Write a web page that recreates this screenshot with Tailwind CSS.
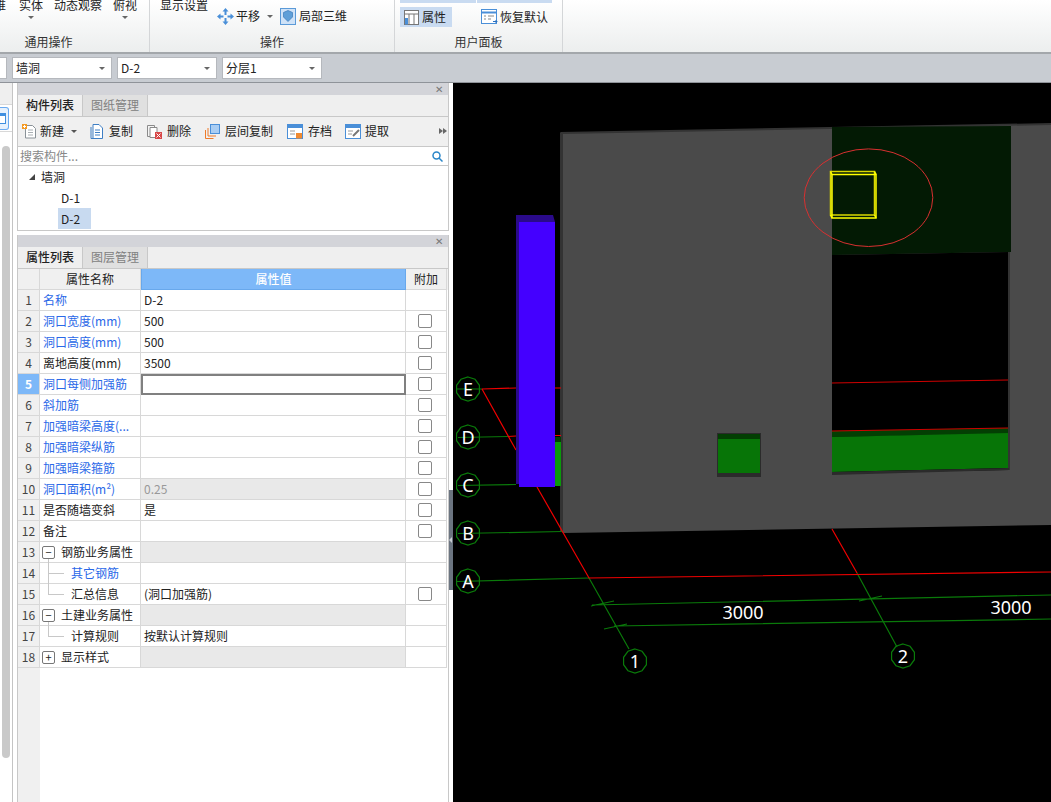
<!DOCTYPE html>
<html lang="zh">
<head>
    <meta charset="UTF-8">
    <title>墙洞</title>
    <script src="https://cdn.jsdelivr.net/npm/@tailwindcss/browser@4"></script>
</head>
<body class="w-[1051px] h-[802px] overflow-hidden bg-white text-[12px] text-[#222] font-['Noto_Sans_CJK_SC',sans-serif]">

    <!-- ribbon -->
    <div class="h-[54px] flex bg-gradient-to-b from-white to-[#eceeee] border-b-2 border-[#a3a7ab]">
        <div class="w-[150px] flex flex-col border-r border-[#d4d6d8]">
            <div class="h-[36px] flex leading-[14px] -mt-[2px]">
                <span class="w-[19px] -ml-[6px] pl-0 shrink-0">维</span>
                <div class="ml-[6px] w-[24px] flex flex-col items-center"><span>实体</span><i class="mt-[4px] border-x-[3px] border-x-transparent border-t-[3px] border-t-[#666]"></i></div>
                <span class="ml-[11px]">动态观察</span>
                <div class="ml-[11px] w-[24px] flex flex-col items-center"><span>俯视</span><i class="mt-[4px] border-x-[3px] border-x-transparent border-t-[3px] border-t-[#666]"></i></div>
            </div>
            <div class="text-center leading-[14px] mt-[1px] -ml-[52px] text-[#333]">通用操作</div>
        </div>
        <div class="w-[245px] flex flex-col border-r border-[#d4d6d8]">
            <div class="h-[36px] flex">
                <span class="ml-[10px] -mt-[2px] leading-[14px]">显示设置</span>
                <div class="ml-[9px] mt-[7px] h-[18px] flex items-center">
                    <svg class="w-[17px] h-[17px]" viewBox="0 0 17 17" fill="#4a8fd8"><path d="M8.5 0l3 3.500h-2v3.500h-2v-3.500h-2zM8.500 17l-3-3.500h2v-3.500h2v3.500h2zM0 8.500l3.500-3v2h3v2h-3v2zM17 8.500l-3.500 3v-2h-3v-2h3v-2z"/></svg>
                    <span class="ml-[2px]">平移</span>
                    <i class="ml-[7px] border-x-[3px] border-x-transparent border-t-[3px] border-t-[#666]"></i>
                    <span class="ml-[7px] w-[16px] h-[17px] flex items-center justify-center bg-[#cfe2f7] border border-[#5b9ad8]">
                        <svg class="w-[10px] h-[12px]" viewBox="0 0 10 12"><path d="M5 .5L9.500 2.500V7L5 11.500.5 7V2.500z" fill="#5f9fd8" stroke="#3a78b8" stroke-width=".7"/></svg>
                    </span>
                    <span class="ml-[3px]">局部三维</span>
                </div>
            </div>
            <div class="text-center leading-[14px] -mt-[1px] text-[#333]">操作</div>
        </div>
        <div class="w-[168px] flex flex-col border-r border-[#d4d6d8]">
            <div class="h-[36px] pl-[5px]">
                <div class="flex gap-[1px]">
                    <span class="w-[76px] h-[3px] bg-[#c9dbf1]"></span>
                    <span class="w-[75px] h-[3px] bg-[#c9dbf1]"></span>
                </div>
                <div class="flex mt-[4px] items-center">
                    <div class="w-[52px] h-[20px] flex items-center pl-[4px] bg-[#c9dbf1]">
                        <svg class="w-[15px] h-[15px]" viewBox="0 0 15 15" fill="none" stroke="#777"><rect x=".5" y=".5" width="14" height="14" fill="#fff"/><path d="M.5 4h14M5 4v10.500M10 4v10.500"/><rect x="1" y="8" width="3" height="6.500" fill="#4a8fd8" stroke="none"/></svg>
                        <span class="ml-[3px]">属性</span>
                    </div>
                    <svg class="ml-[29px] w-[17px] h-[16px]" viewBox="0 0 17 16" fill="none" stroke="#4a8fd8"><rect x=".5" y=".5" width="15" height="14" fill="#fff"/><path d="M.5 3.500h15" stroke-width="2"/><path d="M3 7h2M7 7h6M3 10h2M7 10h3" stroke="#888"/><path d="M12 12.500h4M14.500 11l1.500 1.500-1.500 1.500" stroke="#2a70c0"/></svg>
                    <span class="ml-[2px]">恢复默认</span>
                </div>
            </div>
            <div class="text-center leading-[14px] -mt-[1px] text-[#333]">用户面板</div>
        </div>
    </div>

    <!-- combo bar -->
    <div class="h-[29px] flex items-center gap-[5px] bg-[#c8ccd2] border-b border-[#8f9399] -ml-[93px]">
        <div class="w-[100px] h-[22px] flex items-center justify-end pr-[6px] bg-white border border-[#b5b8bd]"><i class="border-x-[3px] border-x-transparent border-t-[3px] border-t-[#666]"></i></div>
        <div class="w-[100px] h-[22px] flex items-center justify-between px-[3px] pr-[6px] bg-white border border-[#b5b8bd]">墙洞<i class="border-x-[3px] border-x-transparent border-t-[3px] border-t-[#666]"></i></div>
        <div class="w-[100px] h-[22px] flex items-center justify-between px-[3px] pr-[6px] bg-white border border-[#b5b8bd]">D-2<i class="border-x-[3px] border-x-transparent border-t-[3px] border-t-[#666]"></i></div>
        <div class="w-[100px] h-[22px] flex items-center justify-between px-[3px] pr-[6px] bg-white border border-[#b5b8bd]">分层1<i class="border-x-[3px] border-x-transparent border-t-[3px] border-t-[#666]"></i></div>
    </div>

    <div class="h-[719px] flex">
        <!-- left rail -->
        <div class="w-[13px] flex flex-col bg-white border-r border-[#c4c4c4]">
            <div class="h-[22px] bg-[#efefef] border-b border-[#d8d8d8]"></div>
            <div class="h-[27px] flex items-center border-b border-[#d8d8d8]">
                <span class="w-[9px] h-[23px] flex items-center bg-[#e6f1fd] border border-l-0 border-[#6aaaf0] rounded-r-[3px]">
                    <span class="w-[6px] h-[11px] bg-white border border-l-0 border-[#3f8fe0] border-t-[3px]"></span>
                </span>
            </div>
            <div class="w-[8px] h-[612px] ml-[2px] mt-[14px] rounded-[4px] bg-[#c9c9c9]"></div>
        </div>
        <div class="w-[4px] bg-white"></div>

        <!-- panels -->
        <div class="w-[432px] flex flex-col">
            <div class="h-[148px] flex flex-col border border-t-0 border-[#c8c8c8] bg-white">
                <div class="h-[12px] shrink-0 flex justify-end items-center pr-[5px] bg-[#d3d4d9] text-[#777] text-[10px] leading-none">✕</div>
                <div class="h-[22px] shrink-0 flex bg-[#efefef] border-b border-[#c8c8c8]">
                    <span class="w-[65px] text-center leading-[20px] font-medium border-r border-[#c8c8c8]">构件列表</span>
                    <span class="w-[65px] text-center leading-[20px] text-[#808080] bg-[#e0e0e0] border-r border-[#c8c8c8]">图纸管理</span>
                </div>
                <div class="h-[30px] shrink-0 flex items-center pl-[4px] pb-[1px] bg-[#f0f0f0] border-b border-[#c8c8c8]">
                    <svg class="w-[15px] h-[15px]" viewBox="0 0 15 15" fill="none"><path d="M3.500 1.500h7l3 3v9.500h-10z" fill="#fff" stroke="#8a9298"/><path d="M6 6h5M6 8.500h5M6 11h5" stroke="#a8aeb2"/><rect x="0" y="0" width="5" height="5" fill="#f59a23"/><path d="M1 2.500h3M2.500 1v3" stroke="#fff"/></svg>
                    <span class="ml-[3px]">新建</span>
                    <i class="ml-[7px] border-x-[3px] border-x-transparent border-t-[3px] border-t-[#555]"></i>
                    <svg class="ml-[13px] w-[13px] h-[15px]" viewBox="0 0 13 15" fill="none" stroke="#3f7fc4"><path d="M3 .5h6l3.500 3.500v10.500h-9.500z" fill="#fff"/><path d="M1 3v11.500h2M5 6h5M5 8.500h5M5 11h5"/></svg>
                    <span class="ml-[6px]">复制</span>
                    <svg class="ml-[14px] w-[15px] h-[15px]" viewBox="0 0 15 15" fill="none" stroke="#8a8a8a"><path d="M.5 1.500h7v11h-7z" fill="#f4f4f4"/><path d="M3 3.500h7v10h-7z" fill="#fff"/><rect x="8" y="8" width="7" height="7" fill="#d84848" stroke="none"/><path d="M9.500 9.500l4 4M13.500 9.500l-4 4" stroke="#fff"/></svg>
                    <span class="ml-[5px]">删除</span>
                    <svg class="ml-[14px] w-[15px] h-[15px]" viewBox="0 0 15 15" fill="none"><path d="M.5 6v8.500h8M3 4v8h8" stroke="#ee7b2a"/><rect x="5.500" y=".5" width="9" height="9" fill="#a9cdf3" stroke="#4a8fd8"/></svg>
                    <span class="ml-[5px]">层间复制</span>
                    <svg class="ml-[14px] w-[16px] h-[15px]" viewBox="0 0 16 15" fill="none" stroke="#4a8fd8"><rect x=".5" y=".5" width="15" height="14" fill="#fff"/><path d="M.5 2.500h15" stroke-width="3"/><path d="M3 7h5M3 10h5" stroke="#999"/><rect x="9" y="9" width="6" height="5.500" fill="#f08a30" stroke="none"/></svg>
                    <span class="ml-[5px]">存档</span>
                    <svg class="ml-[13px] w-[16px] h-[15px]" viewBox="0 0 16 15" fill="none"><rect x=".5" y=".5" width="15" height="14" fill="#fff" stroke="#4a8fd8"/><path d="M.5 2.500h15" stroke="#4a8fd8" stroke-width="3"/><path d="M3 7h5M3 10h4" stroke="#999"/><path d="M8 12l6-6" stroke="#777" stroke-width="2"/></svg>
                    <span class="ml-[4px]">提取</span>
                    <span class="ml-auto mr-[1px] flex">
                        <i class="border-y-[3px] border-y-transparent border-l-[4px] border-l-[#666]"></i>
                        <i class="border-y-[3px] border-y-transparent border-l-[4px] border-l-[#666]"></i>
                    </span>
                </div>
                <div class="h-[19px] shrink-0 flex items-center justify-between pl-[2px] pr-[5px] text-[#888] border-b border-[#c8c8c8]">
                    搜索构件...
                    <svg class="w-[11px] h-[11px]" viewBox="0 0 11 11" fill="none" stroke="#2a86c8" stroke-width="1.500"><circle cx="4.500" cy="4.500" r="3.500"/><path d="M7 7l3.500 3.500"/></svg>
                </div>
                <div>
                    <div class="h-[21px] flex items-center pl-[11px]">
                        <i class="w-0 h-0 border-l-[6px] border-l-transparent border-b-[6px] border-b-[#444]"></i>
                        <span class="ml-[6px]">墙洞</span>
                    </div>
                    <div class="h-[21px] flex items-center pl-[43px]">D-1</div>
                    <div class="h-[21px] flex items-center ml-[40px] w-[33px] pl-[3px] bg-[#c8daf0]">D-2</div>
                </div>
            </div>
            <div class="h-[4px] shrink-0 bg-white"></div>
            <div class="flex-1 flex flex-col border-x border-[#c8c8c8] bg-white">
                <div class="h-[12px] shrink-0 flex justify-end items-center pr-[5px] bg-[#d3d4d9] text-[#777] text-[10px] leading-none">✕</div>
                <div class="h-[22px] shrink-0 flex bg-[#efefef] border-b border-[#c8c8c8]">
                    <span class="w-[65px] text-center leading-[20px] font-medium border-r border-[#c8c8c8]">属性列表</span>
                    <span class="w-[65px] text-center leading-[20px] text-[#808080] bg-[#e0e0e0] border-r border-[#c8c8c8]">图层管理</span>
                </div>
                <div class="flex-1 flex flex-col relative">
                    <!-- gutter goes on below the last row -->
                    <div class="absolute left-0 top-0 bottom-0 w-[22px] bg-[#f0f0f0]"></div>
                    <div class="relative grid grid-cols-[22px_101px_265px_41px] w-[430px] h-[21px] bg-[#f0f0f0] text-center leading-[20px]">
                        <span class="border-r border-b border-[#d8d8d8]"></span>
                        <span class="border-r border-b border-[#d8d8d8]">属性名称</span>
                        <span class="bg-[#7db8f8] border border-t-0 border-[#68a8ec] text-white font-medium">属性值</span>
                        <span class="border-r border-b border-[#d8d8d8]">附加</span>
                    </div>
                    <div id="rows" class="relative"></div>
                </div>
            </div>
        </div>

        <!-- splitter -->
        <div class="w-[4px] flex flex-col bg-white">
            <div class="h-[407px]"></div>
            <div class="h-[100px] bg-[#6b7480] flex items-center">
                <i class="border-y-[3px] border-y-transparent border-r-[3px] border-r-[#c8ccd2]"></i>
            </div>
        </div>

        <!-- 3d view -->
        <svg class="w-[598px] h-[719px] bg-black" viewBox="453 83 598 719" font-family="'Noto Sans'">
            <defs>
                <polygon id="axis" points="0,-12 7.050,-9.710 11.410,-3.710 11.410,3.710 7.050,9.710 0,12 -7.050,9.710 -11.410,3.710 -11.410,-3.710 -7.050,-9.710" fill="none" stroke="#0a7a0a" stroke-width="1.200"/>
            </defs>
            <!-- wall -->
            <polygon points="560,132 1051,123 1051,126 562,135" fill="#333"/>
            <polygon points="560,133 563,133 563,533 560,531" fill="#333"/>
            <polygon points="563,134 1051,125 1051,525 563,533" fill="#4a4a4a"/>
            <polygon points="832,127 1011,126 1011,252 832,255" fill="#031a04"/>
            <polygon points="832,255 1009,252 1009,470 832,473" fill="#000"/>
            <polygon points="1008,252 1010,252 1010,470 1008,470" fill="#333"/>
            <polygon points="832,431 1008,428 1008,434 832,437" fill="#033f03"/>
            <polygon points="832,437 1008,433 1008,468 832,472" fill="#077507"/>
            <polygon points="832,472 1009,468 1009,470 832,475" fill="#2b2b2b"/>
            <path d="M832 383L1008 380M832 431L1008 428" stroke="#d00000" fill="none"/>
            <!-- small hole -->
            <rect x="717" y="433" width="44" height="44" fill="#2b2b2b"/>
            <rect x="718" y="434" width="42" height="5" fill="#033f03"/>
            <rect x="718" y="439" width="42" height="34" fill="#077507"/>
            <!-- selection -->
            <ellipse cx="868.500" cy="197.700" rx="64.300" ry="48.800" fill="none" stroke="#d83030"/>
            <g fill="none" stroke="#ffff00" stroke-width="1.500">
                <rect x="830.500" y="171.500" width="44" height="43.500" stroke="#d8d800"/>
                <rect x="832" y="174.500" width="44" height="43.500"/>
                <path d="M830.500 171.500L832 174.500M874.500 171.500L876 174.500M830.500 215L832 218M874.500 215L876 218"/>
            </g>
            <!-- behind the column -->
            <rect x="555" y="437" width="6" height="5" fill="#033f03"/>
            <rect x="555" y="442" width="6" height="44" fill="#0a9a0a"/>
            <!-- grid lines -->
            <g fill="none" stroke="#0a7a0a" stroke-width="1.200">
                <path d="M457 389H482M458 437.500L508 436.500M458 485.500L516 484.500M458 533.500L562 531.500M457 581.500L589 578"/>
                <path d="M589 578L629 649M857 573L897 647"/>
                <path d="M592 605L1051 595M591 606L614 601M859 601L882 596M604 629L627 624M614 626L1051 619"/>
            </g>
            <g fill="none" stroke="#f00000" stroke-width="1.200">
                <path d="M482 389L516 388M555 388L561 388M508 436.500L516 436M555 435.500L561 435.500"/>
                <path d="M482 389L516 450M537 487L589 578L1051 572M832 529L857 573"/>
            </g>
            <!-- column -->
            <polygon points="516,215 553,215 555,222 519,222 519,484 516,484" fill="#2a0a8a"/>
            <rect x="519" y="222" width="36" height="265" fill="#4400ff"/>
            <!-- axis bubbles -->
            <g fill="#fff" font-size="18" text-anchor="middle">
                <use href="#axis" x="468" y="389"/><text x="468" y="395.500">E</text>
                <use href="#axis" x="468" y="437"/><text x="468" y="443.500">D</text>
                <use href="#axis" x="468" y="485"/><text x="468" y="491.500">C</text>
                <use href="#axis" x="468" y="533"/><text x="468" y="539.500">B</text>
                <use href="#axis" x="468" y="581"/><text x="468" y="587.500">A</text>
                <use href="#axis" x="635" y="661"/><text x="635" y="667.500">1</text>
                <use href="#axis" x="903" y="656"/><text x="903" y="662.500">2</text>
                <text x="743" y="619">3000</text>
                <text x="1011" y="614">3000</text>
            </g>
        </svg>
    </div>

    <script>
        const blue = 'text-[#2a68e8]';
        const rows = [
            { name: '名称', value: 'D-2', blue: true, noCheck: true },
            { name: '洞口宽度(mm)', value: '500', blue: true },
            { name: '洞口高度(mm)', value: '500', blue: true },
            { name: '离地高度(mm)', value: '3500' },
            { name: '洞口每侧加强筋', value: '', blue: true, current: true },
            { name: '斜加筋', value: '', blue: true },
            { name: '加强暗梁高度(...', value: '', blue: true },
            { name: '加强暗梁纵筋', value: '', blue: true },
            { name: '加强暗梁箍筋', value: '', blue: true },
            { name: '洞口面积(m²)', value: '0.25', blue: true, grey: true },
            { name: '是否随墙变斜', value: '是' },
            { name: '备注', value: '' },
            { name: '钢筋业务属性', group: '−', grey: true, noCheck: true },
            { name: '其它钢筋', child: 'mid', blue: true, noCheck: true },
            { name: '汇总信息', value: '(洞口加强筋)', child: 'end' },
            { name: '土建业务属性', group: '−', grey: true, noCheck: true },
            { name: '计算规则', value: '按默认计算规则', child: 'single', noCheck: true },
            { name: '显示样式', group: '+', grey: true, noCheck: true },
        ];

        function nameCell(r) {
            const color = r.blue ? blue : '';
            if (r.group) {
                return `<span class="w-[13px] h-[13px] flex items-center justify-center border border-[#777] rounded-[2px] bg-white leading-none text-[11px]">${r.group}</span><span class="ml-[6px]">${r.name}</span>`;
            }
            if (r.child) {
                const up = r.child === 'end' ? 'h-[11px] -top-[1px]' : 'h-[14px] -top-[4px]';
                const down = r.child === 'mid' ? '<i class="absolute left-[8px] top-[10px] w-px h-[11px] bg-[#c8c8c8]"></i>' : '';
                return `<i class="absolute left-[8px] ${up} w-px bg-[#c8c8c8]"></i>${down}<i class="absolute left-[8px] top-[10px] w-[16px] h-px bg-[#c8c8c8]"></i><span class="ml-[29px] ${color}">${r.name}</span>`;
            }
            return `<span class="ml-[1px] ${color}">${r.name}</span>`;
        }

        document.getElementById('rows').innerHTML = rows.map((r, i) => `
            <div class="grid grid-cols-[22px_101px_265px_41px] w-[430px] h-[21px] leading-[20px]">
                <span class="text-center border-r border-b border-[#d8d8d8] ${r.current ? 'bg-[#7db8f8] text-white font-bold' : 'bg-[#f0f0f0] text-[#444]'}">${i + 1}</span>
                <span class="relative flex items-center pl-[2px] bg-white border-r border-b border-[#d8d8d8]">${nameCell(r)}</span>
                ${r.current
                    ? '<span class="bg-white border-2 border-[#808080]"></span>'
                    : `<span class="pl-[3px] border-r border-b border-[#d8d8d8] ${r.grey ? 'bg-[#e9e9e9]' : 'bg-white'} ${r.value === '0.25' ? 'text-[#999]' : ''}">${r.value || ''}</span>`}
                <span class="flex items-center pl-[12px] bg-white border-r border-b border-[#d8d8d8]">${r.noCheck ? '' : '<i class="block w-[14px] h-[14px] -mt-[1px] bg-white border border-[#888] rounded-[2px]"></i>'}</span>
            </div>
        `).join('');
    </script>
</body>
</html>
